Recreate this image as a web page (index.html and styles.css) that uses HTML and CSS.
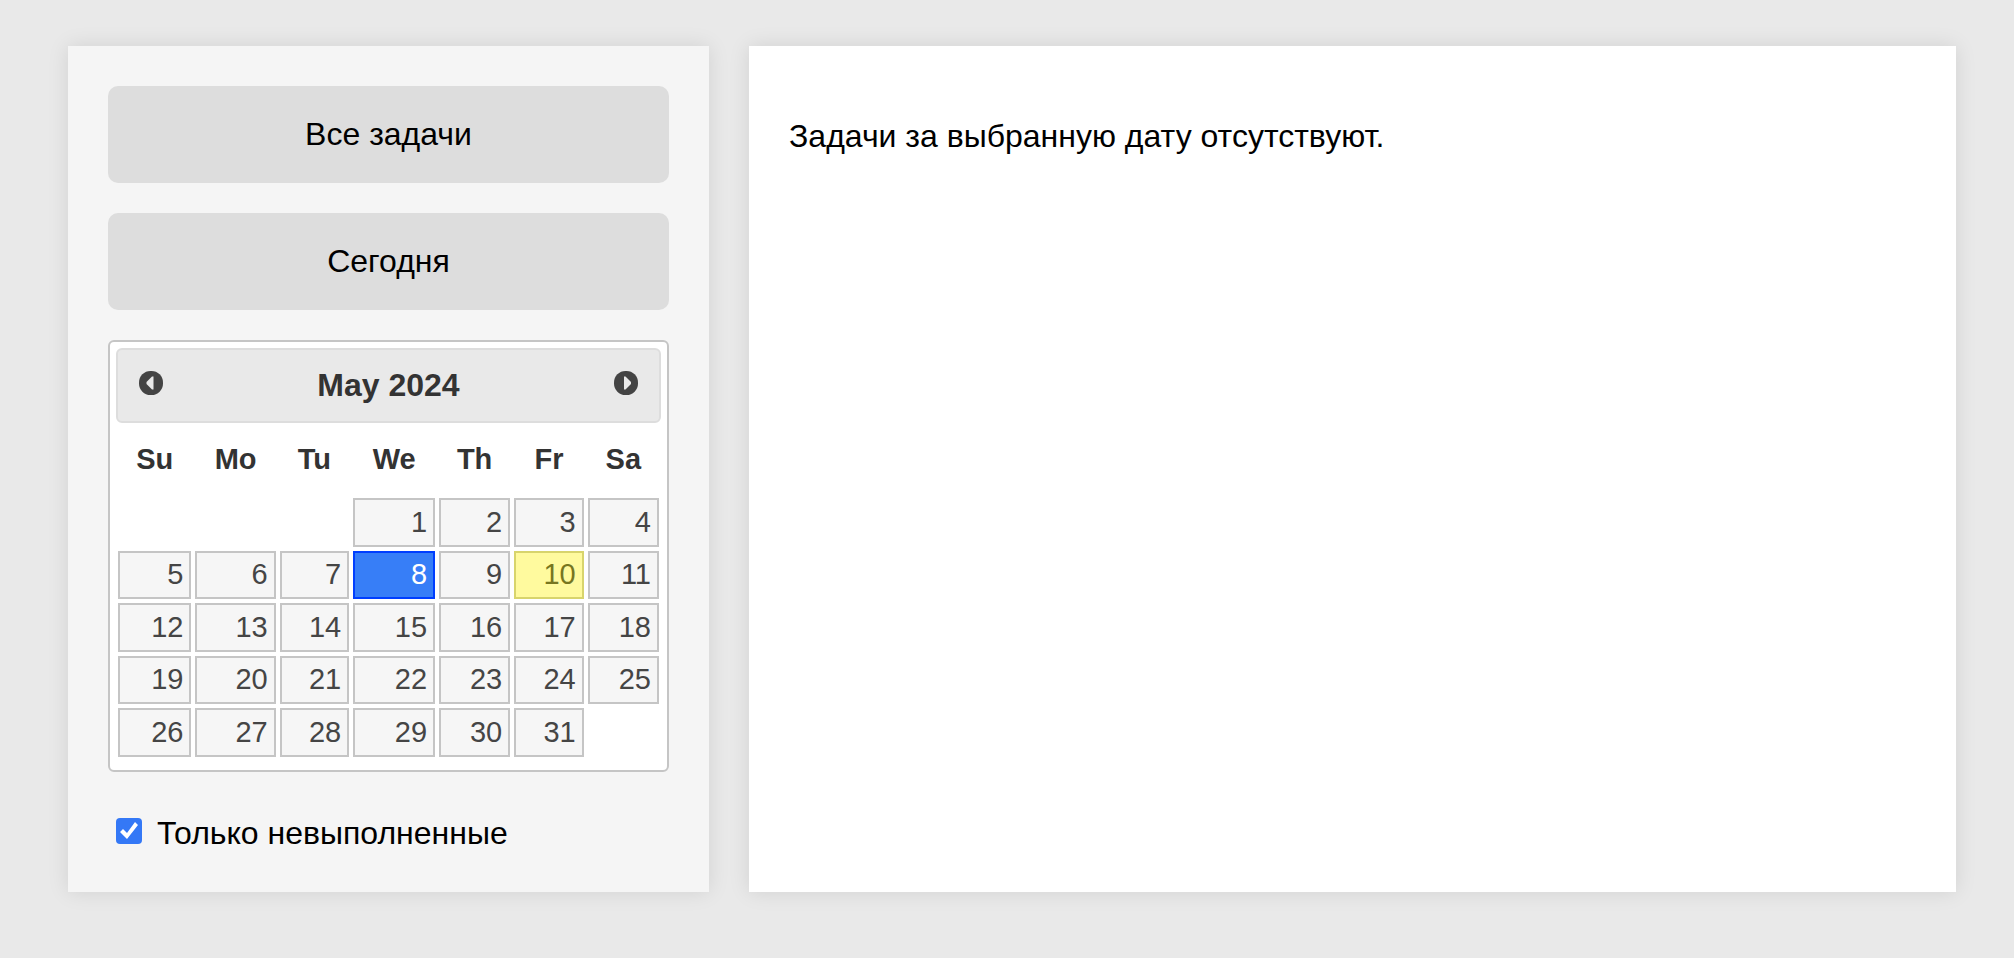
FILE: index.html
```html
<!DOCTYPE html>
<html lang="ru">
<head>
<meta charset="utf-8">
<title>Задачи</title>
<link rel="stylesheet" href="styles.css">
</head>
<body>
<div class="layout">
  <aside class="sidebar">
    <button class="filter-button" type="button">Все задачи</button>
    <button class="filter-button" type="button">Сегодня</button>
    <section class="calendar">
      <header class="calendar-header">
        <button class="month-nav" type="button" aria-label="Prev">
          <svg viewBox="0 0 24 24" aria-hidden="true"><rect width="24" height="24" rx="11.500" fill="#444"/><path d="M14.500 5.500V18.500H13L7.500 13V11L13 5.500Z" fill="#e9e9e9"/></svg>
        </button>
        <div class="calendar-title">May 2024</div>
        <button class="month-nav" type="button" aria-label="Next">
          <svg viewBox="0 0 24 24" aria-hidden="true"><rect width="24" height="24" rx="11.500" fill="#444"/><path d="M10 5.500V18.500H11.500L17 13V11L11.500 5.500Z" fill="#e9e9e9"/></svg>
        </button>
      </header>
      <table class="month">
        <thead>
          <tr><th>Su</th><th>Mo</th><th>Tu</th><th>We</th><th>Th</th><th>Fr</th><th>Sa</th></tr>
        </thead>
        <tbody>
          <tr><td></td><td></td><td></td><td><a href="#">1</a></td><td><a href="#">2</a></td><td><a href="#">3</a></td><td><a href="#">4</a></td></tr>
          <tr><td><a href="#">5</a></td><td><a href="#">6</a></td><td><a href="#">7</a></td><td><a class="selected" href="#">8</a></td><td><a href="#">9</a></td><td><a class="today" href="#">10</a></td><td><a href="#">11</a></td></tr>
          <tr><td><a href="#">12</a></td><td><a href="#">13</a></td><td><a href="#">14</a></td><td><a href="#">15</a></td><td><a href="#">16</a></td><td><a href="#">17</a></td><td><a href="#">18</a></td></tr>
          <tr><td><a href="#">19</a></td><td><a href="#">20</a></td><td><a href="#">21</a></td><td><a href="#">22</a></td><td><a href="#">23</a></td><td><a href="#">24</a></td><td><a href="#">25</a></td></tr>
          <tr><td><a href="#">26</a></td><td><a href="#">27</a></td><td><a href="#">28</a></td><td><a href="#">29</a></td><td><a href="#">30</a></td><td><a href="#">31</a></td><td></td></tr>
        </tbody>
      </table>
    </section>
    <div class="unfinished">
      <input class="checkbox" type="checkbox" id="unfinished" checked>
      <label for="unfinished">Только невыполненные</label>
    </div>
  </aside>
  <main class="tasks">
    <p class="empty-message">Задачи за выбранную дату отсутствуют.</p>
  </main>
</div>
</body>
</html>
```
FILE: styles.css
```css
*,
*::before {
  box-sizing: border-box;
}

body {
  margin: 0;
  background: #e9e9e9;
  color: #000;
  font: 32px/37px "Liberation Sans", Arial, sans-serif;
}

.layout {
  display: grid;
  grid-template-columns: 641fr 1207fr;
  gap: 40px;
  padding: 46px 58px 66px 68px;
}

.sidebar,
.tasks {
  padding: 40px;
  box-shadow: 0 0 20px rgba(0, 0, 0, 0.1);
}

.sidebar {
  display: flex;
  flex-direction: column;
  gap: 30px;
  background: #f5f5f5;
}

.tasks {
  background: #fff;
}

.empty-message {
  margin: 32px 0;
}

.filter-button {
  padding: 30px;
  border: 0;
  border-radius: 10px;
  background: #ddd;
  color: inherit;
  font: inherit;
  cursor: pointer;
}

.calendar {
  padding: 6px 6px 0;
  border: 2px solid #c5c5c5;
  border-radius: 6px;
  background: #fff;
  color: #333;
}

.calendar-header {
  display: flex;
  align-items: flex-start;
  padding: 6px 4px 7px;
  border: 2px solid #ddd;
  border-radius: 6px;
  background: #e9e9e9;
}

.calendar-title {
  flex: 1;
  font-weight: bold;
  line-height: 58px;
  text-align: center;
}

.month-nav {
  display: grid;
  place-items: center;
  width: 58px;
  height: 54px;
  padding: 0;
  border: 0;
  background: none;
  cursor: pointer;
}

.month-nav svg {
  width: 24px;
  height: 24px;
}

.month {
  width: 100%;
  margin-bottom: 11px;
  border-collapse: collapse;
  font-size: 29px;
  line-height: 33px;
}

.month th {
  padding: 20px 9px;
}

.month td {
  padding: 2px;
}

.month a {
  display: block;
  padding: 6px;
  border: 2px solid #c5c5c5;
  background: #f6f6f6;
  color: #454545;
  text-align: right;
  text-decoration: none;
}

.month tbody tr:nth-child(even) a {
  padding-top: 5px;
}

.month .selected {
  border-color: #003eff;
  background: #377ef7;
  color: #fff;
}

.month .today {
  border-color: #d8d46c;
  background: #fffa9e;
  color: #777620;
}

.unfinished {
  display: flex;
  gap: 15px;
  margin-top: 13px;
  padding-left: 8px;
}

.checkbox {
  appearance: none;
  width: 26px;
  height: 26px;
  margin: 3px 0;
  border-radius: 4px;
  background: #3478f6;
}

.checkbox:checked::before {
  content: "";
  display: block;
  width: 26px;
  height: 26px;
  background: #fff;
  clip-path: polygon(4px 14px, 7px 11px, 11px 15px, 19px 4px, 22px 7px, 11px 21px);
}
```
